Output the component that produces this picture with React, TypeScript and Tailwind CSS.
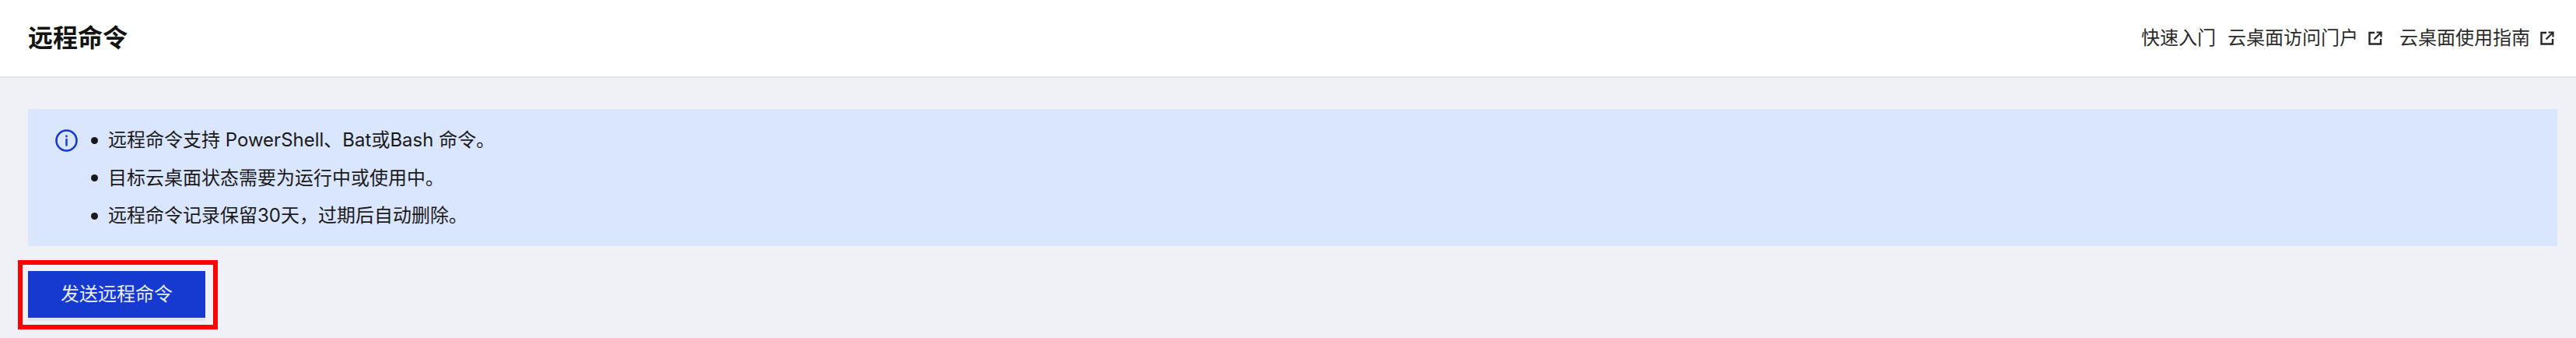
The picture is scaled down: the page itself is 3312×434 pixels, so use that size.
import React from "react";

const font = { fontFamily: '"Inter", "Noto Sans CJK SC", sans-serif' };

function ExternalIcon() {
  return (
    <svg width="18" height="18" viewBox="0 0 18 18" fill="none" stroke="#262626" strokeWidth="2.4" className="shrink-0">
      <path d="M8 2H1.5V16.5H16V10" />
      <path d="M7.5 10.5L15.5 2.5M10.5 1.5H16.5V7.5" strokeWidth="2.2" />
    </svg>
  );
}

function InfoIcon() {
  return (
    <svg width="29" height="29" viewBox="0 0 29 29" fill="none" className="shrink-0">
      <circle cx="14.5" cy="14.5" r="13" stroke="#1639d0" strokeWidth="2.6" />
      <rect x="13.3" y="7.5" width="2.4" height="2.8" fill="#1639d0" />
      <rect x="13.3" y="12" width="2.4" height="9.5" fill="#1639d0" />
    </svg>
  );
}

const tips = [
  "远程命令支持 PowerShell、Bat或Bash 命令。",
  "目标云桌面状态需要为运行中或使用中。",
  "远程命令记录保留30天，过期后自动删除。",
];

export default function App() {
  return (
    <div className="h-[434px] w-[3312px] overflow-hidden bg-[#eff1f6] text-[24px] text-[#1a1a1a]" style={font}>
      <header className="flex h-[100px] items-center justify-between border-b-2 border-[#e2e5ef] bg-white pl-[36px] pr-[28px]">
        <h1 className="text-[32px] font-bold leading-[40px] text-[#141414]">远程命令</h1>
        <nav className="flex items-center text-[#2b2b2b]">
          <span className="mr-[15px]">快速入门</span>
          <span className="mr-[22px] flex items-center gap-[13px]">云桌面访问门户<ExternalIcon /></span>
          <span className="flex items-center gap-[13px]">云桌面使用指南<ExternalIcon /></span>
        </nav>
      </header>
      <main className="pl-[36px] pr-[24px] pt-[40px]">
        <div className="flex gap-[17px] bg-[#dae5fe] pb-[19px] pl-[35px] pr-[35px] pt-[20px]">
          <div className="flex h-[40px] items-center pt-px"><InfoIcon /></div>
          <ul className="flex flex-col gap-[8.5px]">
            {tips.map((t) => (
              <li key={t} className="flex h-[40px] items-center gap-[13px] leading-[40px]">
                <span className="h-[9px] w-[9px] rounded-full bg-[#1a1a1a]" />
                <span>{t}</span>
              </li>
            ))}
          </ul>
        </div>
        <div className="relative mt-[32px] w-[228px]">
          <button className="h-[60px] w-[228px] bg-[#1639d0] text-[24px] text-[#e8edfb] shadow-[0_4px_0_#e2e6f3]">发送远程命令</button>
          <div className="absolute left-[-13px] top-[-14px] h-[89px] w-[257px] border-[6px] border-[#ff0000]" />
        </div>
      </main>
    </div>
  );
}
